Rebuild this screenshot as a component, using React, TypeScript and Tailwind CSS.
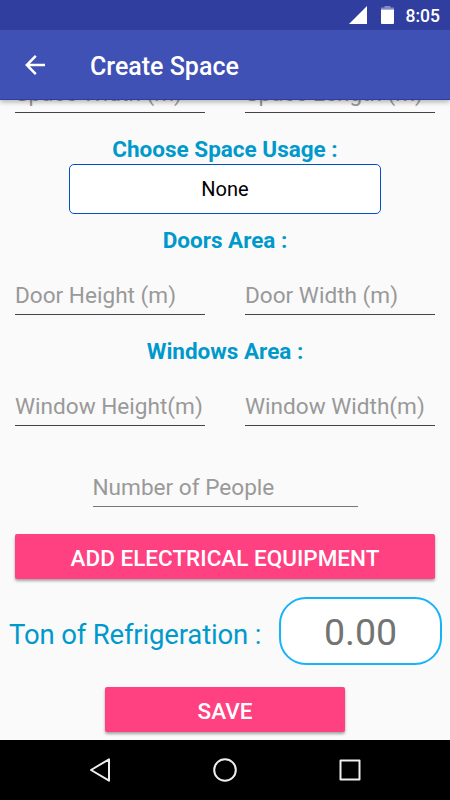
import type { ReactNode } from 'react'

interface FieldProps {
  label: string
  className?: string
}

function Field({ label, className = 'w-[190px] border-[#444444]' }: FieldProps) {
  return (
    <div className={`h-[34px] border-b pt-px text-[22.6px] leading-7 whitespace-nowrap text-[#999999] ${className}`}>
      {label}
    </div>
  )
}

function FieldRow({ children }: { children: ReactNode }) {
  return <div className="flex justify-between px-[15px]">{children}</div>
}

function Heading({ children }: { children: ReactNode }) {
  return (
    <h2 className="h-7 text-center text-[22.5px] leading-7 font-bold text-[#0099cc]">{children}</h2>
  )
}

function ActionButton({ label, className }: { label: string; className: string }) {
  return (
    <button
      className={`flex h-[45px] items-center justify-center rounded-[2px] bg-[#ff4081] text-[22.5px] font-medium text-white shadow-[0_2px_3px_rgba(0,0,0,0.35)] ${className}`}
    >
      {label}
    </button>
  )
}

function StatusBar() {
  return (
    <div className="flex h-[30px] items-center justify-end bg-[#303f9f] pr-[10px] text-white">
      <svg width="18" height="18" viewBox="0 0 18 18" className="mr-[14px]">
        <path d="M0 18 18 0v18z" fill="currentColor" />
      </svg>
      <svg width="13" height="18" viewBox="0 0 13 18" className="mr-3">
        <path d="M0 3.5V1.5h3.5V0h6v1.5H13v2z" fill="currentColor" opacity="0.4" />
        <path d="M0 3.5h13V17a1 1 0 0 1-1 1H1a1 1 0 0 1-1-1z" fill="currentColor" />
      </svg>
      <span className="pt-[2px] text-[17.5px] leading-7 font-medium">8:05</span>
    </div>
  )
}

function Toolbar() {
  return (
    <header className="flex h-[70px] items-center border-b border-[#303f9f] bg-[#3f51b5] text-white">
      <svg width="20" height="20" viewBox="0 0 20 20" fill="none" stroke="currentColor" strokeWidth="2.5" className="ml-[25px]">
        <path d="M20 10H2M10.8 .9 1.8 10l9 9.1" />
      </svg>
      <h1 className="ml-[45px] pt-[5px] text-[25px] leading-[30px] font-medium">Create Space</h1>
    </header>
  )
}

function NavBar() {
  return (
    <nav className="flex h-[60px] items-center bg-black text-[#eeeeee]">
      <svg width="450" height="60" viewBox="0 0 450 60" fill="none" stroke="currentColor" strokeWidth="2" strokeLinejoin="round">
        <path d="M91 30 109 19.3v21.4z" />
        <circle cx="225" cy="30" r="10.8" />
        <rect x="340.5" y="20.5" width="19" height="19" />
      </svg>
    </nav>
  )
}

export default function App() {
  return (
    <div className="flex h-[800px] w-[450px] flex-col overflow-hidden bg-[#fafafa] font-['Roboto',sans-serif]">
      {/* App bar keeps its shadow above the scrolled form */}
      <div className="z-10 shadow-[0_2px_5px_rgba(0,0,0,0.3)]">
        <StatusBar />
        <Toolbar />
      </div>

      <main className="h-[640px] overflow-hidden">
        <div className="-mt-[21px]">
          <FieldRow>
            <Field label="Space Width (m)" />
            <Field label="Space Length (m)" />
          </FieldRow>

          <div className="pt-[22px]">
            <Heading>Choose Space Usage :</Heading>
            <div className="mx-auto mt-px flex h-[50px] w-[312px] items-center justify-center rounded-[5px] border border-[#0050c8] bg-white text-xl text-black">
              None
            </div>
          </div>

          <div className="pt-3">
            <Heading>Doors Area :</Heading>
          </div>
          <div className="pt-[27px]">
            <FieldRow>
              <Field label="Door Height (m)" />
              <Field label="Door Width (m)" />
            </FieldRow>
          </div>

          <div className="pt-[22px]">
            <Heading>Windows Area :</Heading>
          </div>
          <div className="pt-[27px]">
            <FieldRow>
              <Field label="Window Height(m)" />
              <Field label="Window Width(m)" />
            </FieldRow>
          </div>

          <div className="flex justify-center pt-[47px]">
            <Field label="Number of People" className="w-[265px] border-[#777777]" />
          </div>

          <div className="px-[15px] pt-[27px]">
            <ActionButton label="ADD ELECTRICAL EQUIPMENT" className="w-full pt-[4px]" />
          </div>

          {/* Result */}
          <div className="flex items-center justify-between pt-[18px] pr-2 pl-[9px]">
            <span className="pt-[7px] text-[27.5px] leading-8 tracking-[-0.16px] text-[#0099cc]">Ton of Refrigeration :</span>
            <div className="flex h-[68px] w-[163px] items-center justify-center rounded-[27px] border-2 border-[#17b2f8] bg-white pt-[2px] text-[37.5px] text-[#737373]">
              0.00
            </div>
          </div>

          <div className="flex justify-center pt-[22.4px]">
            <ActionButton label="SAVE" className="w-[240px] pt-[4px]" />
          </div>
        </div>
      </main>

      <NavBar />
    </div>
  )
}
